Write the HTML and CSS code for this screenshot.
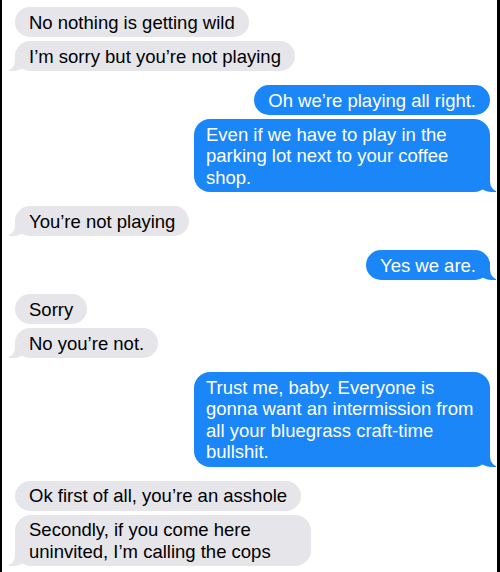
FILE: index.html
```html
<!DOCTYPE html>
<html>
<head>
<meta charset="utf-8">
<link rel="stylesheet" href="styles.css">
</head>
<body>
<div class="screen">
  <div class="thread">
    <div class="group them">
      <div class="bubble">No nothing is getting wild</div>
      <div class="bubble tail">I’m sorry but you’re not playing</div>
    </div>
    <div class="group me">
      <div class="bubble">Oh we’re playing all right.</div>
      <div class="bubble tail wide">Even if we have to play in the<br>parking lot next to your coffee<br>shop.</div>
    </div>
    <div class="group them">
      <div class="bubble tail">You’re not playing</div>
    </div>
    <div class="group me">
      <div class="bubble tail">Yes we are.</div>
    </div>
    <div class="group them">
      <div class="bubble">Sorry</div>
      <div class="bubble tail">No you’re not.</div>
    </div>
    <div class="group me">
      <div class="bubble tail wide">Trust me, baby. Everyone is<br>gonna want an intermission from<br>all your bluegrass craft-time<br>bullshit.</div>
    </div>
    <div class="group them">
      <div class="bubble">Ok first of all, you’re an asshole</div>
      <div class="bubble tail wide">Secondly, if you come here<br>uninvited, I’m calling the cops</div>
    </div>
  </div>
</div>
</body>
</html>
```
FILE: styles.css
```css
html, body {
  margin: 0;
  padding: 0;
  background: #000;
  height: 572px;
  overflow: hidden;
}
.screen {
  margin: 0 3px 0 2px;
  height: 572px;
  overflow: hidden;
  background: #fff;
  font-family: "Liberation Sans", Arial, sans-serif;
  font-size: 18.5px;
  line-height: 21.5px;
}
.thread {
  display: flex;
  flex-direction: column;
  gap: 14px;
  padding: 7px 7px 0 13px;
}
.group {
  display: flex;
  flex-direction: column;
  gap: 4px;
}
.group.them { align-items: flex-start; }
.group.me { align-items: flex-end; }
.bubble {
  position: relative;
  z-index: 0;
  padding: 4.5px 14px 4px 14px;
  border-radius: 16px;
  white-space: nowrap;
}
.bubble.wide {
  box-sizing: border-box;
  width: 296px;
}
.me .bubble.wide {
  padding-left: 12px;
}
.them .bubble {
  background: #e5e5ea;
  color: #000;
}
.me .bubble {
  background: #1b86f8;
  color: #fff;
}
.bubble.tail::before,
.bubble.tail::after {
  content: "";
  position: absolute;
  bottom: 0;
  z-index: -1;
}
.me .bubble.tail::before {
  right: -6px;
  width: 20px;
  height: 18px;
  background: #1b86f8;
  border-bottom-left-radius: 16px 14px;
}
.me .bubble.tail::after {
  right: -10px;
  width: 10px;
  height: 18px;
  background: #fff;
  border-bottom-left-radius: 10px;
}
.them .bubble.tail::before {
  left: -6px;
  width: 20px;
  height: 18px;
  background: #e5e5ea;
  border-bottom-right-radius: 16px 14px;
}
.them .bubble.tail::after {
  left: -10px;
  width: 10px;
  height: 18px;
  background: #fff;
  border-bottom-right-radius: 10px;
}
```
